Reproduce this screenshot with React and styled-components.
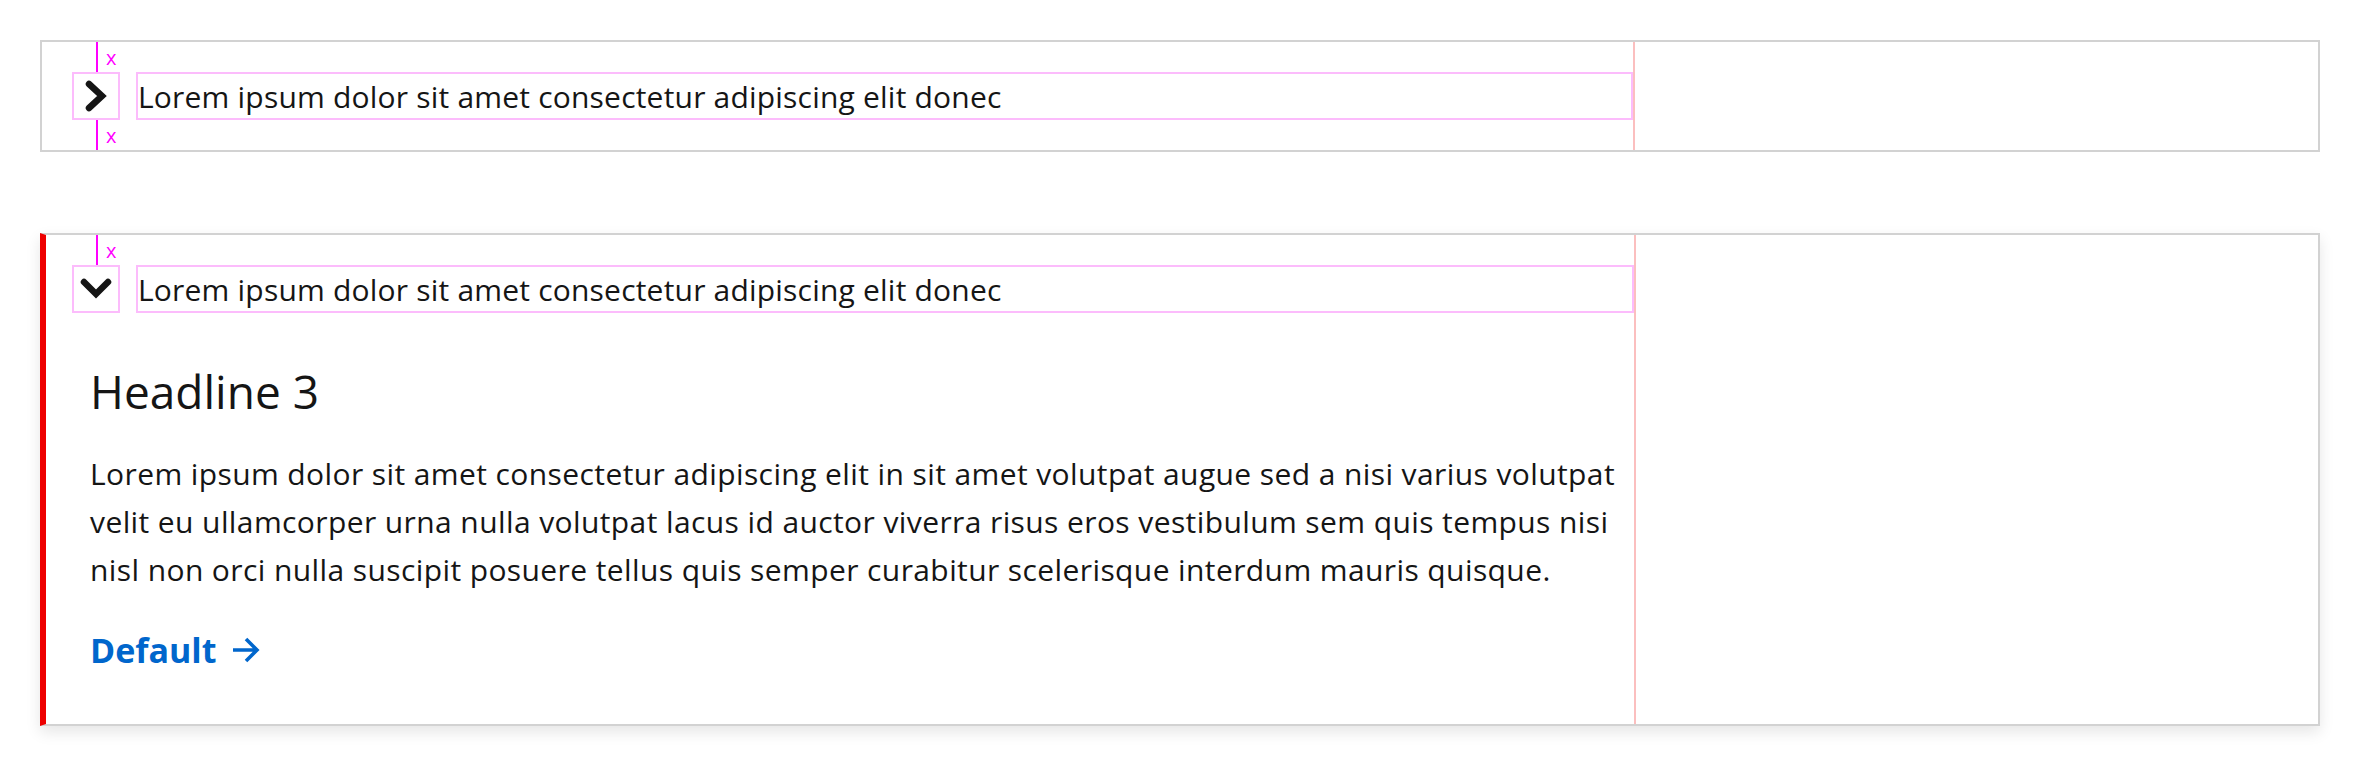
import React from "react";
import styled, { createGlobalStyle } from "styled-components";

const GlobalStyle = createGlobalStyle`
  body {
    margin: 0;
    background: #fff;
    font-family: "Open Sans", "Liberation Sans", sans-serif;
    color: #151515;
  }
`;

const ChevronRight = () => (
  <svg width="32" height="32" viewBox="0 0 32 32" aria-hidden="true">
    <polyline
      points="9,4 22,16 9,28"
      fill="none"
      stroke="#151515"
      strokeWidth="6.5"
      strokeLinecap="round"
      strokeLinejoin="miter"
    />
  </svg>
);

const ChevronDown = () => (
  <svg width="32" height="32" viewBox="0 0 32 32" aria-hidden="true">
    <polyline
      points="4,9 16,21 28,9"
      fill="none"
      stroke="#151515"
      strokeWidth="6.5"
      strokeLinecap="round"
      strokeLinejoin="miter"
    />
  </svg>
);

const ArrowRight = () => (
  <svg width="28" height="28" viewBox="0 0 28 28" aria-hidden="true">
    <path
      d="M1 14 H25 M14 3 L25 14 L14 25"
      fill="none"
      stroke="#0066cc"
      strokeWidth="3.6"
    />
  </svg>
);

const Disclosure = ({ title, expanded, children }) => (
  <Card $expanded={expanded}>
    <Main $expanded={expanded}>
      <Spacer>
        <SpacerLine />
        <SpacerLabel>x</SpacerLabel>
      </Spacer>
      <Header>
        <IconBox>{expanded ? <ChevronDown /> : <ChevronRight />}</IconBox>
        <TitleBox>{title}</TitleBox>
      </Header>
      {expanded ? (
        <Body>{children}</Body>
      ) : (
        <Spacer>
          <SpacerLine />
          <SpacerLabel>x</SpacerLabel>
        </Spacer>
      )}
    </Main>
    <Aside />
  </Card>
);

export default function App() {
  const title = "Lorem ipsum dolor sit amet consectetur adipiscing elit donec";
  return (
    <>
      <GlobalStyle />
      <Page>
        <Disclosure title={title} />
        <Disclosure title={title} expanded>
          <Headline>Headline 3</Headline>
          <Text>
            Lorem ipsum dolor sit amet consectetur adipiscing elit in sit amet
            volutpat augue sed a nisi varius volutpat velit eu ullamcorper urna
            nulla volutpat lacus id auctor viverra risus eros vestibulum sem
            quis tempus nisi nisl non orci nulla suscipit posuere tellus quis
            semper curabitur scelerisque interdum mauris quisque.
          </Text>
          <CtaLink href="#">
            Default
            <ArrowRight />
          </CtaLink>
        </Disclosure>
      </Page>
    </>
  );
}

const Page = styled.div`
  display: flex;
  flex-direction: column;
  gap: 81px;
  padding: 40px;
`;

const Card = styled.section`
  display: grid;
  grid-template-columns: 7fr 3fr;
  background: #fff;
  border: 2px solid #d2d2d2;
  border-left: ${(p) => (p.$expanded ? "6px solid #ee0000" : "2px solid #d2d2d2")};
  box-shadow: ${(p) => (p.$expanded ? "0 6px 14px rgba(0, 0, 0, 0.1)" : "none")};
`;

const Main = styled.div`
  display: flex;
  flex-direction: column;
  padding-left: ${(p) => (p.$expanded ? "26px" : "30px")};
  border-right: 2px solid #fbbfbf;
  min-width: 0;
`;

const Aside = styled.div``;

const Spacer = styled.div`
  display: flex;
  align-items: center;
  height: 30px;
  padding-left: 24px;
`;

const SpacerLine = styled.div`
  align-self: stretch;
  width: 2px;
  background: #ff00ff;
`;

const SpacerLabel = styled.span`
  margin: 2px 0 0 8px;
  font-size: 20px;
  line-height: 1;
  color: #ff00ff;
`;

const Header = styled.div`
  display: flex;
  gap: 16px;
  height: 48px;
`;

const IconBox = styled.div`
  box-sizing: border-box;
  width: 48px;
  height: 48px;
  flex: none;
  display: flex;
  align-items: center;
  justify-content: center;
  border: 2px solid #fcbcfc;
`;

const TitleBox = styled.div`
  box-sizing: border-box;
  flex: 1;
  display: flex;
  align-items: center;
  border: 2px solid #fcbcfc;
  font-size: 30px;
  letter-spacing: 0.2px;
  color: #151515;
  white-space: nowrap;
`;

const Body = styled.div`
  padding: 49px 8px 48px 18px;
`;

const Headline = styled.h3`
  margin: 0;
  font-size: 46px;
  font-weight: 400;
  line-height: 1.3;
  color: #151515;
`;

const Text = styled.p`
  margin: 28px 0 0;
  font-size: 30px;
  line-height: 48px;
  letter-spacing: 0.4px;
  color: #151515;
`;

const CtaLink = styled.a`
  display: inline-flex;
  align-items: center;
  gap: 16px;
  margin-top: 31px;
  font-size: 34px;
  font-weight: 700;
  line-height: 51px;
  color: #0066cc;
  text-decoration: none;
`;
